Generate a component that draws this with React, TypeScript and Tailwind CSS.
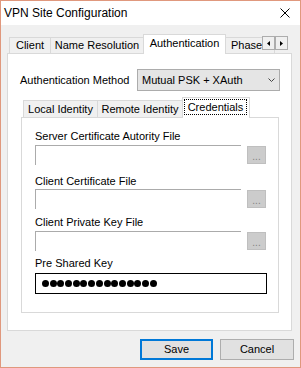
import React from "react";

function OuterTab({ label, w, active, extra = "" }: { label: string; w: string; active?: boolean; extra?: string }) {
  if (active) {
    return (
      <div className={`${w} h-[20px] border-t border-l border-r border-[#d9d9d9] bg-white flex items-center justify-center pb-[2px] shrink-0 ${extra}`}>
        {label}
      </div>
    );
  }
  return (
    <div className={`${w} h-[17px] border border-[#d9d9d9] bg-[#f0f0f0] flex items-center justify-center shrink-0 ${extra}`}>
      {label}
    </div>
  );
}

function FileRow() {
  return (
    <div className="flex items-start">
      <div className="w-[206px] h-[20px] border-t border-l border-[#ababab] bg-white" />
      <div className="ml-[6px] mt-[1px] w-[19px] h-[18px] border border-[#bfbfbf] bg-[#cccccc] flex justify-center items-end pb-[1px] text-[#838383] text-[10px] leading-[10px]">
        ...
      </div>
    </div>
  );
}

export default function App() {
  return (
    <div className="w-[301px] h-[368px] border border-[#e0987d] bg-[#f0f0f0] flex flex-col font-['Liberation_Sans',Arial,sans-serif] text-[11px] leading-[13px] text-black overflow-hidden">
      {/* Title bar */}
      <div className="h-[24px] bg-white flex items-center pl-[3px] pr-[10px] shrink-0">
        <span className="text-[12px] leading-[16px]">VPN Site Configuration</span>
        <svg className="ml-auto" width="10" height="10" viewBox="0 0 10 10">
          <path d="M0.5 0.5 L9.5 9.5 M9.5 0.5 L0.5 9.5" stroke="#000" strokeWidth="1" />
        </svg>
      </div>

      {/* Body */}
      <div className="flex-1 flex flex-col pl-[6px] pt-[9px]">
        {/* Outer tab strip */}
        <div className="relative z-10 -mb-px flex items-end h-[20px] pl-[2px] w-[285px]">
          <OuterTab label="Client" w="w-[42px]" />
          <OuterTab label="Name Resolution" w="w-[94px]" extra="-ml-px" />
          <OuterTab label="Authentication" w="w-[83px]" active extra="-ml-px relative z-10" />
          <div className="-ml-px w-[50px] h-[17px] border border-[#d9d9d9] bg-[#f0f0f0] flex items-center pl-[5px] shrink-0 overflow-hidden">
            Phase 1
          </div>
          <div className="absolute left-[255px] top-[2px] flex z-20">
            <div className="w-[13px] h-[14px] border border-[#adadad] bg-[#f0f0f0] flex items-center justify-center">
              <svg width="3" height="5" viewBox="0 0 3 5">
                <path d="M3 0 L0 2.5 L3 5 Z" fill="#000" />
              </svg>
            </div>
            <div className="w-[13px] h-[14px] border border-[#adadad] bg-[#f0f0f0] flex items-center justify-center">
              <svg width="3" height="5" viewBox="0 0 3 5">
                <path d="M0 0 L3 2.5 L0 5 Z" fill="#000" />
              </svg>
            </div>
          </div>
        </div>

        {/* Outer panel */}
        <div className="w-[285px] h-[278px] border border-[#d9d9d9] bg-white flex flex-col pt-[15px] shrink-0">
          <div className="flex items-center h-[22px] pl-[12px]">
            <span className="w-[117px] shrink-0">Authentication Method</span>
            <div className="w-[143px] h-[22px] border border-[#acacac] bg-[#e5e5e5] flex items-center pl-[4px] pr-[4px]">
              <span>Mutual PSK + XAuth</span>
              <svg className="ml-auto" width="7" height="4" viewBox="0 0 7 4">
                <path d="M0.5 0.5 L3.5 3.5 L6.5 0.5" stroke="#444" strokeWidth="1" fill="none" />
              </svg>
            </div>
          </div>

          {/* Inner tabs */}
          <div className="ml-[13px] mt-[6px] flex flex-col">
            <div className="relative z-10 -mb-px flex items-end h-[21px] pl-[2px]">
              <div className="w-[75px] h-[18px] border border-[#d9d9d9] bg-[#f0f0f0] flex items-center justify-center shrink-0">
                Local Identity
              </div>
              <div className="-ml-px w-[86px] h-[18px] border border-[#d9d9d9] bg-[#f0f0f0] flex items-center justify-center shrink-0">
                Remote Identity
              </div>
              <div className="-ml-px w-[68px] h-[21px] border-t border-l border-r border-[#d9d9d9] bg-white flex items-start pl-[1px] pt-[1px] shrink-0 relative z-10">
                <span className="w-[63px] h-[16px] border border-dotted border-black flex items-center justify-center">
                  Credentials
                </span>
              </div>
            </div>

            {/* Inner panel */}
            <div className="w-[258px] h-[196px] border border-[#d9d9d9] bg-white flex flex-col pl-[13px] pt-[12px]">
              <div>Server Certificate Autority File</div>
              <div className="mt-[2px]">
                <FileRow />
              </div>
              <div className="mt-[10px]">Client Certificate File</div>
              <div className="mt-[1px]">
                <FileRow />
              </div>
              <div className="mt-[7px]">Client Private Key File</div>
              <div className="mt-[2px]">
                <FileRow />
              </div>
              <div className="mt-[6px]">Pre Shared Key</div>
              <div className="mt-[3px] w-[232px] h-[21px] border border-black bg-white flex items-center pl-[6px] gap-[0.7px]">
                {Array.from({ length: 15 }).map((_, i) => (
                  <div key={i} className="w-[7px] h-[7px] rounded-full bg-black shrink-0" />
                ))}
              </div>
            </div>
          </div>
        </div>

        {/* Buttons */}
        <div className="mt-[8px] flex justify-end pr-[6px] gap-[7px]">
          <div className="w-[73px] h-[21px] border-2 border-[#0078d7] bg-[#e1e1e1] flex items-center justify-center">
            Save
          </div>
          <div className="w-[74px] h-[21px] border border-[#adadad] bg-[#e1e1e1] flex items-center justify-center">
            Cancel
          </div>
        </div>
      </div>
    </div>
  );
}
